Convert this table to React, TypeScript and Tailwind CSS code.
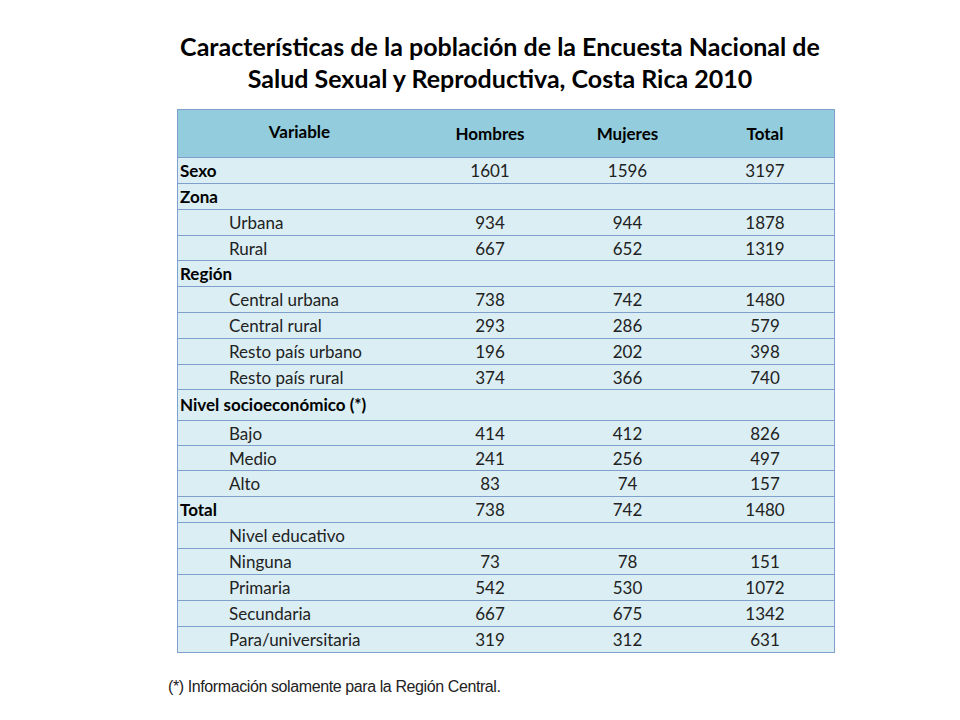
type Row = {
  label: string
  bold?: boolean
  h?: number
  m?: number
  t?: number
  rowH: string
}

const rows: Row[] = [
  { label: "Sexo", bold: true, h: 1601, m: 1596, t: 3197, rowH: "h-[26px]" },
  { label: "Zona", bold: true, rowH: "h-[26px]" },
  { label: "Urbana", h: 934, m: 944, t: 1878, rowH: "h-[26px]" },
  { label: "Rural", h: 667, m: 652, t: 1319, rowH: "h-[25px]" },
  { label: "Región", bold: true, rowH: "h-[26px]" },
  { label: "Central urbana", h: 738, m: 742, t: 1480, rowH: "h-[26px]" },
  { label: "Central rural", h: 293, m: 286, t: 579, rowH: "h-[26px]" },
  { label: "Resto país urbano", h: 196, m: 202, t: 398, rowH: "h-[26px]" },
  { label: "Resto país rural", h: 374, m: 366, t: 740, rowH: "h-[25px]" },
  { label: "Nivel socioeconómico (*)", bold: true, rowH: "h-[31px]" },
  { label: "Bajo", h: 414, m: 412, t: 826, rowH: "h-[25px]" },
  { label: "Medio", h: 241, m: 256, t: 497, rowH: "h-[25px]" },
  { label: "Alto", h: 83, m: 74, t: 157, rowH: "h-[26px]" },
  { label: "Total", bold: true, h: 738, m: 742, t: 1480, rowH: "h-[26px]" },
  { label: "Nivel educativo", rowH: "h-[26px]" },
  { label: "Ninguna", h: 73, m: 78, t: 151, rowH: "h-[26px]" },
  { label: "Primaria", h: 542, m: 530, t: 1072, rowH: "h-[26px]" },
  { label: "Secundaria", h: 667, m: 675, t: 1342, rowH: "h-[26px]" },
  { label: "Para/universitaria", h: 319, m: 312, t: 631, rowH: "h-[26px]" },
]

const cols = "grid grid-cols-[243px_138px_137px_138px]"

export default function App() {
  return (
    <div className="w-[960px] h-[720px] bg-white font-['Lato','Open_Sans',sans-serif] text-[#111]">
      {/* Title */}
      <div className="pt-[30px] ml-[140px] w-[720px] text-center text-[25px] leading-[32px] font-bold text-black">
        <div>Características de la población de la Encuesta Nacional de</div>
        <div>Salud Sexual y Reproductiva, Costa Rica 2010</div>
      </div>

      {/* Table */}
      <div className="mt-[15px] ml-[177px] w-[658px] border border-[#7f9fcc] bg-[#daeef3] text-[17px]">
        <div className={`${cols} h-[47px] bg-[#93cddd] items-center font-bold text-black`}>
          <div className="text-center -mt-[3px]">Variable</div>
          <div className="text-center">Hombres</div>
          <div className="text-center">Mujeres</div>
          <div className="text-center">Total</div>
        </div>
        {rows.map((r) => (
          <div key={r.label} className={`${cols} items-center border-t border-[#7f9fcc] ${r.rowH}`}>
            <div className={r.bold ? "pl-[2px] font-bold text-black" : "pl-[51px] text-[#222]"}>
              {r.label}
            </div>
            <div className="text-center text-[#222]">{r.h}</div>
            <div className="text-center text-[#222]">{r.m}</div>
            <div className="text-center text-[#222]">{r.t}</div>
          </div>
        ))}
      </div>

      {/* Footnote */}
      <div className="mt-[22px] ml-[168px] text-[16px] text-[#222] font-['Liberation_Sans',sans-serif] tracking-[-0.4px]">
        (*) Información solamente para la Región Central.
      </div>
    </div>
  )
}
